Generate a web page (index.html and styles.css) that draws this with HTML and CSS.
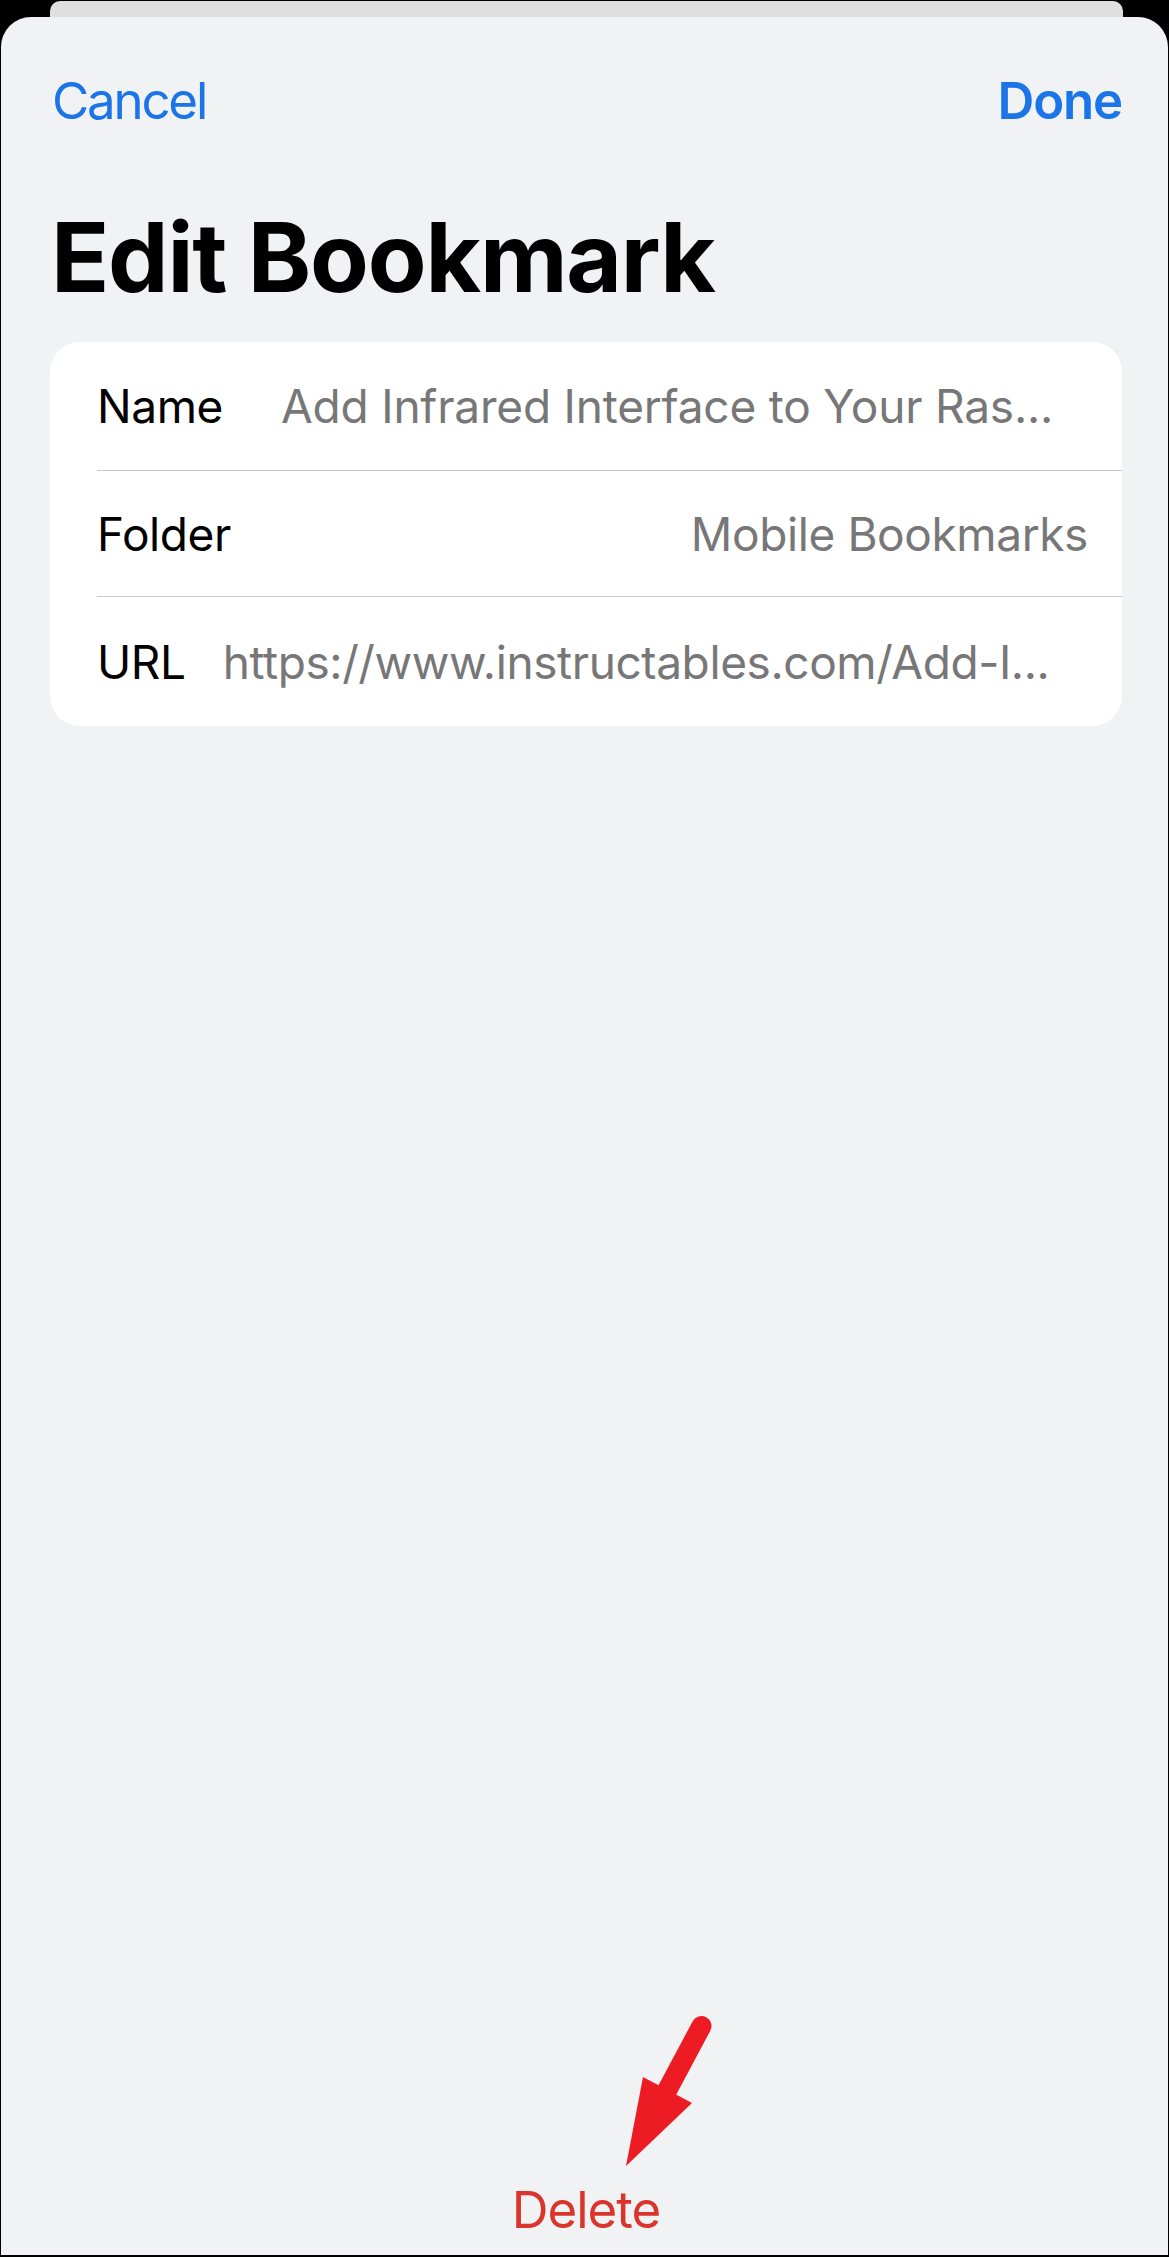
FILE: index.html
```html
<!DOCTYPE html>
<html lang="en">
<head>
    <meta charset="UTF-8">
    <meta name="viewport" content="width=device-width, initial-scale=1.0">
    <title>Edit Bookmark</title>
    <link rel="stylesheet" href="styles.css">
</head>
<body>
    <div class="screen">
        <div class="back-sheet"></div>

        <div class="sheet">
            <div class="nav">
                <span class="nav-button cancel">Cancel</span>
                <span class="nav-button done">Done</span>
            </div>

            <h1>Edit Bookmark</h1>

            <div class="card">
                <div class="row row-name">
                    <span class="label">Name</span>
                    <span class="value name-value">Add Infrared Interface to Your Ras...</span>
                </div>
                <div class="row row-folder">
                    <span class="label">Folder</span>
                    <span class="value folder-value">Mobile Bookmarks</span>
                </div>
                <div class="row row-url">
                    <span class="label">URL</span>
                    <span class="value url-value">https://www.instructables.com/Add-I...</span>
                </div>
            </div>

            <div class="delete">Delete</div>

            <!-- annotation arrow pointing at Delete -->
            <svg class="arrow" width="120" height="170" viewBox="0 0 120 170">
                <line x1="101.5" y1="16" x2="62" y2="90" stroke="#ed1c24" stroke-width="20" stroke-linecap="round"/>
                <polygon points="26,156 43,67 92,93" fill="#ed1c24"/>
            </svg>
        </div>
    </div>
</body>
</html>
```

FILE: styles.css
```css
body {
    margin: 0;
    background-color: #000;
    font-family: Inter, "Noto Sans", sans-serif;
}

.screen {
    width: 1169px;
    height: 2257px;
    box-sizing: border-box;
    padding: 0 1px 2px 1px;
    display: flex;
    flex-direction: column;
}

.back-sheet {
    height: 16px;
    margin: 1px 45px 0 49px;
    background-color: #dfdfdf;
    border-radius: 10px 10px 0 0;
    flex-shrink: 0;
}

.sheet {
    position: relative;
    flex: 1;
    display: flex;
    flex-direction: column;
    padding: 0 46px 0 49px;
    background-color: #f1f2f4;
    border-radius: 30px 30px 0 0;
}

.nav {
    display: flex;
    justify-content: space-between;
    padding-top: 53px;
    padding-left: 2px;
}

.nav-button {
    font-size: 51px;
    line-height: 61px;
    color: #1b74e8;
}

.cancel {
    letter-spacing: -2.2px;
}

.done {
    font-weight: 600;
    letter-spacing: -1.2px;
}

h1 {
    margin: 68px 0 0 1px;
    font-size: 96px;
    line-height: 116px;
    font-weight: 700;
    color: #000;
    letter-spacing: -1.2px;
}

.card {
    margin-top: 27px;
    background-color: #fff;
    border-radius: 30px;
    overflow: hidden;
}

.row {
    display: flex;
    align-items: center;
    margin-left: 47px;
    padding-right: 34px;
    font-size: 46px;
    line-height: 56px;
    white-space: nowrap;
    letter-spacing: -0.4px;
}

.row-name {
    height: 128px;
    border-bottom: 1px solid #c8c8ca;
}

.row-folder {
    height: 125px;
    border-bottom: 1px solid #c8c8ca;
}

.row-url {
    height: 129px;
}

.label {
    color: #000;
}

.value {
    color: #777;
}

.name-value {
    margin-left: 58px;
    letter-spacing: -0.2px;
}

.folder-value {
    margin-left: auto;
}

.url-value {
    margin-left: 37px;
}

.delete {
    margin-top: auto;
    padding-bottom: 15px;
    text-align: center;
    font-size: 51px;
    line-height: 61px;
    color: #d9352c;
    letter-spacing: -1px;
}

.arrow {
    position: absolute;
    left: 599px;
    top: 1993px;
}
```
